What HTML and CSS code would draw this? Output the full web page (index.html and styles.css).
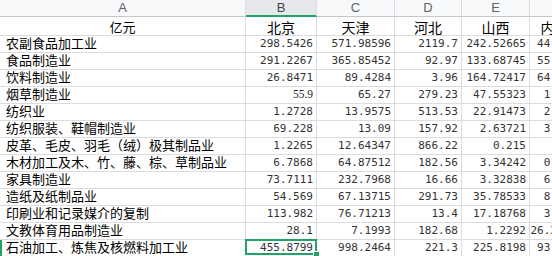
FILE: index.html
```html
<!DOCTYPE html>
<html lang="zh-CN">
<head>
<meta charset="utf-8">
<title>Sheet</title>
<link rel="stylesheet" href="styles.css">
</head>
<body>
<div class="sheet">
  <div class="hd">A</div><div class="hd hd-sel">B</div><div class="hd">C</div><div class="hd">D</div><div class="hd">E</div><div class="hd">F</div>

  <div class="c title">亿元</div><div class="c city">北京</div><div class="c city">天津</div><div class="c city">河北</div><div class="c city">山西</div><div class="c city">内蒙古</div>

  <div class="c lbl">农副食品加工业</div><div class="c num">298.5426</div><div class="c num">571.98596</div><div class="c num">2119.7</div><div class="c num">242.52665</div><div class="c num">44 12731</div>
  <div class="c lbl">食品制造业</div><div class="c num">291.2267</div><div class="c num">365.85452</div><div class="c num">92.97</div><div class="c num">133.68745</div><div class="c num">55 27184</div>
  <div class="c lbl">饮料制造业</div><div class="c num">26.8471</div><div class="c num">89.4284</div><div class="c num">3.96</div><div class="c num">164.72417</div><div class="c num">64 02539</div>
  <div class="c lbl">烟草制造业</div><div class="c num alt">55.9</div><div class="c num">65.27</div><div class="c num">279.23</div><div class="c num">47.55323</div><div class="c num">1.34052</div>
  <div class="c lbl">纺织业</div><div class="c num">1.2728</div><div class="c num">13.9575</div><div class="c num">513.53</div><div class="c num">22.91473</div><div class="c num">2.81637</div>
  <div class="c lbl">纺织服装、鞋帽制造业</div><div class="c num">69.228</div><div class="c num">13.09</div><div class="c num">157.92</div><div class="c num">2.63721</div><div class="c num">3.40925</div>
  <div class="c lbl">皮革、毛皮、羽毛（绒）极其制品业</div><div class="c num">1.2265</div><div class="c num">12.64347</div><div class="c num">866.22</div><div class="c num">0.215</div><div class="c num"></div>
  <div class="c lbl">木材加工及木、竹、藤、棕、草制品业</div><div class="c num">6.7868</div><div class="c num">64.87512</div><div class="c num">182.56</div><div class="c num">3.34242</div><div class="c num">0.52718</div>
  <div class="c lbl">家具制造业</div><div class="c num">73.7111</div><div class="c num">232.7968</div><div class="c num">16.66</div><div class="c num">3.32838</div><div class="c num">6.18204</div>
  <div class="c lbl">造纸及纸制品业</div><div class="c num">54.569</div><div class="c num">67.13715</div><div class="c num">291.73</div><div class="c num">35.78533</div><div class="c num">8.05126</div>
  <div class="c lbl">印刷业和记录媒介的复制</div><div class="c num">113.982</div><div class="c num">76.71213</div><div class="c num">13.4</div><div class="c num">17.18768</div><div class="c num">3.71492</div>
  <div class="c lbl">文教体育用品制造业</div><div class="c num">28.1</div><div class="c num">7.1993</div><div class="c num">182.68</div><div class="c num">1.2292</div><div class="c num">26.350002</div>
  <div class="c lbl row-sel">石油加工、炼焦及核燃料加工业</div><div class="c num cell-sel">455.8799</div><div class="c num">998.2464</div><div class="c num">221.3</div><div class="c num">225.8198</div><div class="c num">93.41862</div>
</div>
</body>
</html>
```

FILE: styles.css
```css
html, body {
  margin: 0;
  padding: 0;
  background: #fff;
  overflow: hidden;
}

.sheet {
  display: grid;
  grid-template-columns: 246px 71px 78px 67px 68px 64px;
  grid-template-rows: 17px 19px repeat(13, 17px);
  width: 594px;
}

.hd {
  box-sizing: border-box;
  background: #f8f9fa;
  border-right: 1px solid #dadce0;
  border-bottom: 1px solid #c4c7cc;
  font-family: "Liberation Sans", Arial, sans-serif;
  font-size: 13px;
  color: #5f6368;
  display: flex;
  align-items: center;
  justify-content: center;
  line-height: 1;
  padding-bottom: 1px;
}

.hd-sel {
  background: #e6e8eb;
  border-bottom: 2px solid #21a366;
  color: #444;
}

.c {
  box-sizing: border-box;
  border-right: 1px solid #dadce0;
  border-bottom: 1px solid #dadce0;
  display: flex;
  align-items: center;
  white-space: pre;
  overflow: visible;
  color: #000;
  position: relative;
  line-height: 1;
}

.title {
  justify-content: center;
  font-family: "Noto Sans CJK SC", "Noto Sans", sans-serif;
  font-size: 13px;
  padding-top: 1px;
}

.city {
  justify-content: center;
  font-family: "Noto Sans CJK SC", "Noto Sans", sans-serif;
  font-size: 14px;
  padding-top: 1px;
  overflow: hidden;
}

.lbl {
  font-family: "Noto Sans CJK SC", "Noto Sans", sans-serif;
  font-size: 13px;
  padding-left: 6px;
  padding-bottom: 3px;
}

.num {
  justify-content: flex-end;
  font-family: "DejaVu Sans Mono", "Liberation Mono", monospace;
  font-size: 11px;
  padding-right: 3px;
  padding-bottom: 1px;
  color: #333;
}

.alt {
  font-family: "Liberation Serif", serif;
  font-size: 11.5px;
  color: #222;
}

.row-sel::before {
  content: "";
  position: absolute;
  left: 0;
  top: 0;
  bottom: 0;
  width: 2px;
  background: #21a366;
}

.cell-sel::after {
  content: "";
  position: absolute;
  left: -1px;
  top: -1px;
  right: -1px;
  bottom: 1px;
  border: 2px solid #21a366;
}

.cell-sel::before {
  content: "";
  position: absolute;
  right: -3px;
  bottom: -1px;
  width: 5px;
  height: 5px;
  background: #21a366;
  border-left: 1px solid #fff;
  border-top: 1px solid #fff;
  z-index: 2;
}
```
